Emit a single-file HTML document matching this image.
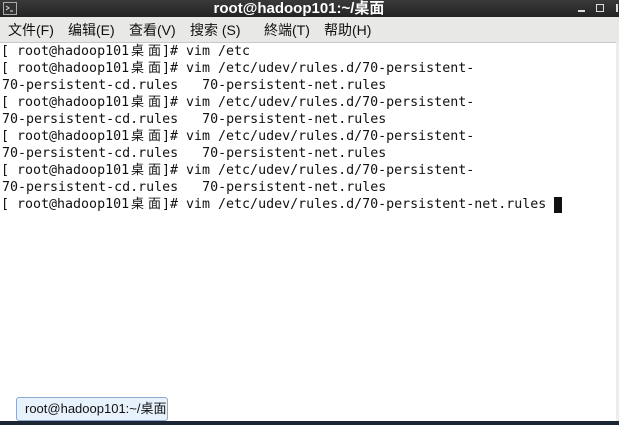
<!DOCTYPE html>
<html><head><meta charset="utf-8"><style>
body{margin:0;width:619px;height:425px;overflow:hidden;background:#fff;position:relative;font-family:"Liberation Sans","Noto Sans CJK SC",sans-serif}
.title{position:absolute;left:0;top:0;width:619px;height:17px;background:linear-gradient(#3a3a3a,#232323);}
.tt{position:absolute;left:0;width:598px;top:0;text-align:center;color:#fff;font-weight:bold;font-size:15px;line-height:17px}
.menu{position:absolute;left:0;top:17px;width:619px;height:25px;background:#e8e8e6;border-bottom:1px solid #c8c8c6}
.menu span{position:absolute;top:0;line-height:26px;font-size:14px;color:#111;white-space:nowrap}
.ln{position:absolute;font-family:"DejaVu Sans Mono","Noto Sans CJK SC",monospace;font-size:13.3px;line-height:17px;white-space:pre;color:#111}
.cj{position:absolute;font-family:"Noto Sans CJK SC",sans-serif;font-size:13px;line-height:17px;color:#111}
</style></head><body>
<div class="title">
<svg style="position:absolute;left:3px;top:2px" width="14" height="13"><rect x="0.5" y="0.5" width="13" height="12" fill="#333" stroke="#aaa"/><path d="M3 4l3 2-3 2M7 9h3" stroke="#ddd" fill="none"/></svg>
<div class="tt">root@hadoop101:~/桌面</div>
<div style="position:absolute;left:578px;top:10px;width:7px;height:2px;background:#ddd"></div>
<div style="position:absolute;left:596px;top:4px;width:6px;height:6px;border:1px solid #ddd"></div>
<div style="position:absolute;left:616px;top:4px;width:2px;height:8px;background:#ddd"></div>
</div>
<div class="menu">
<span style="left:8px">文件(F)</span><span style="left:68px">编辑(E)</span><span style="left:129px">查看(V)</span><span style="left:190px">搜索 (S)</span><span style="left:264px">終端(T)</span><span style="left:324px">帮助(H)</span>
</div>
<div id="t"></div>
<script>
var rest=["vim /etc","vim /etc/udev/rules.d/70-persistent-",null,"vim /etc/udev/rules.d/70-persistent-",null,"vim /etc/udev/rules.d/70-persistent-",null,"vim /etc/udev/rules.d/70-persistent-",null,"vim /etc/udev/rules.d/70-persistent-net.rules"];
var h="";
for(var i=0;i<rest.length;i++){var y=43+i*17;
if(rest[i]===null){h+='<div class="ln" style="left:2px;top:'+y+'px">70-persistent-cd.rules   70-persistent-net.rules</div>';}
else{h+='<div class="ln" style="left:1px;top:'+y+'px">[ root@hadoop101</div><div class="cj" style="left:131px;top:'+(y-2)+'px">桌</div><div class="cj" style="left:148px;top:'+(y-2)+'px">面</div><div class="ln" style="left:162px;top:'+y+'px">]# '+rest[i]+'</div>';}}
document.getElementById('t').innerHTML=h;
</script>
<div style="position:absolute;left:554px;top:197px;width:8px;height:16px;background:#111"></div>
<div style="position:absolute;left:616px;top:42px;width:3px;height:379px;background:#ececec"></div>
<div style="position:absolute;left:16px;top:397px;width:142px;height:22px;background:#e8f2fc;border:1px solid #8fa9d3;border-radius:3px;font-size:13px;line-height:22px;color:#111;padding-left:8px;white-space:nowrap">root@hadoop101:~/桌面</div>
<div style="position:absolute;left:0;top:421px;width:619px;height:4px;background:#1d2633"></div>
</body></html>
